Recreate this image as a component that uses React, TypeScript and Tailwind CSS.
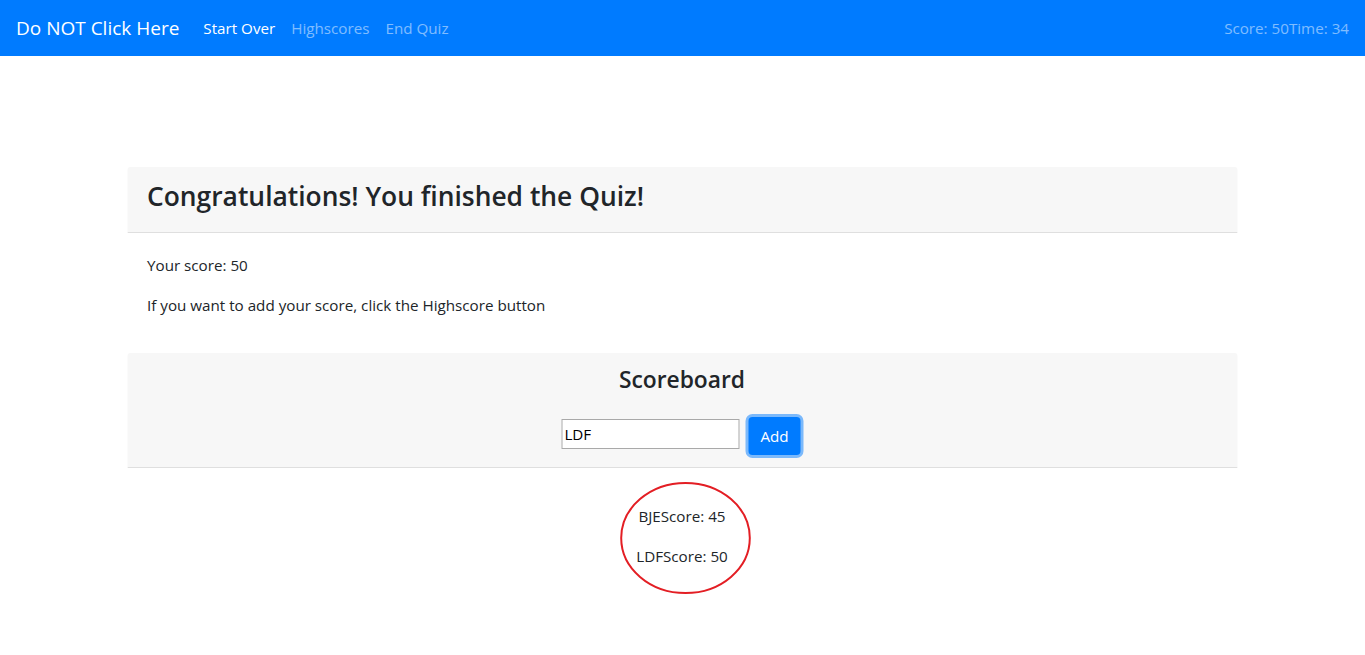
import React from "react";

export default function App() {
  const font = "font-['Open_Sans','Noto_Sans',sans-serif]";
  return (
    <div className={`min-h-[655px] bg-white text-[#212529] ${font}`}>
      <nav className="h-[56px] bg-[#007bff] flex items-center px-4">
        <span className="text-[19px] leading-[30px] text-white mr-4">Do NOT Click Here</span>
        <div className="flex items-center text-[15.2px] leading-6">
          <span className="px-2 text-white">Start Over</span>
          <span className="px-2 text-white/50">Highscores</span>
          <span className="px-2 text-white/50">End Quiz</span>
        </div>
        <div className="ml-auto text-[15.2px] leading-6 text-white/50">
          <span>Score: 50</span>
          <span>Time: 34</span>
        </div>
      </nav>

      <div className="w-[1110px] mx-auto mt-[111px] -translate-x-[0.5px]">
        <div className="bg-[#f7f7f7] border-b border-[#dfdfdf] rounded-t-[3px] px-5 pt-[13px] pb-3">
          <h3 className="text-[26.4px] leading-[32px] font-semibold mb-2">
            Congratulations! You finished the Quiz!
          </h3>
        </div>
        <div className="px-5 py-5 text-[15.2px] leading-6">
          <p className="mb-4">Your score: 50</p>
          <p className="mb-4">If you want to add your score, click the Highscore button</p>
        </div>

        <div className="bg-[#f7f7f7] border-b border-[#dfdfdf] rounded-t-[3px] px-5 pt-3 pb-3 flex flex-col items-center">
          <h4 className="text-[22.8px] leading-[29px] font-semibold">Scoreboard</h4>
          <div className="flex items-end gap-[9px] mt-[23px] -translate-x-[1px]">
            <input
              defaultValue="LDF"
              className={`w-[178px] h-[30px] mb-[6px] bg-white border border-[#a9a9a9] px-[2px] text-[15.2px] text-black outline-none ${font}`}
            />
            <button className="h-[38px] px-3 rounded-[4px] bg-[#007bff] text-white text-[15.2px] leading-6 shadow-[0_0_0_3px_rgba(0,123,255,0.5)]">
              Add
            </button>
          </div>
        </div>

        <div className="relative pt-[36px] flex flex-col items-center text-[15.2px] leading-6">
          <p className="mb-4">BJEScore: 45</p>
          <p className="mb-4">LDFScore: 50</p>
          <svg
            className="absolute left-[492px] top-[13px]"
            width="132"
            height="114"
            viewBox="0 0 132 114"
          >
            <ellipse cx="66" cy="57" rx="64.3" ry="55" fill="none" stroke="#e31e24" strokeWidth="2" />
          </svg>
        </div>
      </div>
    </div>
  );
}
